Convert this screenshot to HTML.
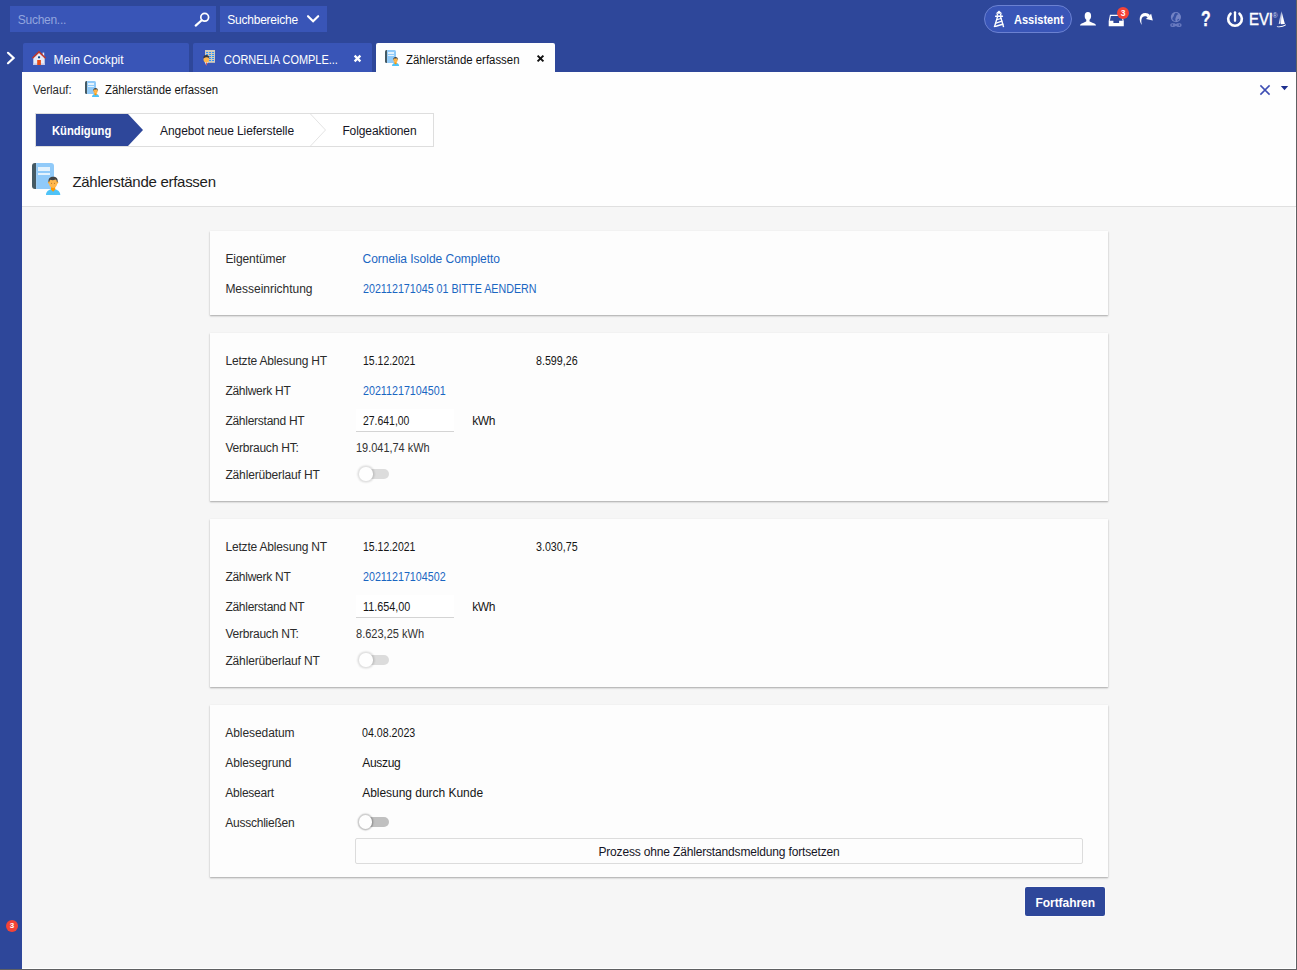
<!DOCTYPE html>
<html lang="de">
<head>
<meta charset="utf-8">
<title>Zählerstände erfassen</title>
<style>
*{box-sizing:border-box;margin:0;padding:0}
html,body{width:1297px;height:970px;overflow:hidden}
body{position:relative;background:#2e479a;font-family:"Liberation Sans",sans-serif;font-size:12px;color:#1e1e1e}
.abs{position:absolute}
svg{position:absolute;overflow:visible}
.t{position:absolute;white-space:nowrap}
#main{left:22px;top:72px;width:1274px;height:897px;background:#f6f6f6}
#hdr{left:22px;top:72px;width:1274px;height:135px;background:#fefefe;border-bottom:1px solid #e0e0e0}
#edgeR{left:1296px;top:0;width:1px;height:970px;background:#5f6062}
#edgeB{left:0;top:969px;width:1297px;height:1px;background:#5f6062}
#edgeRw{left:1295px;top:207px;width:1px;height:762px;background:#fff}
#edgeBw{left:22px;top:968px;width:1274px;height:1px;background:#fff}
.search{left:10px;top:6px;width:206px;height:26px;background:#3955b7}
.sb{left:220px;top:6px;width:107px;height:26px;background:#3955b7}
.tab{top:43px;height:29px;background:#3955b7;border-radius:2px 2px 0 0}
.card{background:#fdfdfd;box-shadow:0 1px 2px rgba(0,0,0,.25),0 1px 1px rgba(0,0,0,.08);left:210px;width:898px}
.inp{left:356px;width:98px;height:23px;background:#fff;border-bottom:1px solid #d4d4d4}
.tog{position:absolute;width:32px;height:16px}
.tog i{position:absolute;left:3px;top:3px;width:28px;height:10px;border-radius:5px;background:#c0c0c0}
.tog b{position:absolute;left:1px;top:1.3px;width:13.4px;height:13.4px;border-radius:50%;background:#fefefe;box-shadow:0 0 1.3px 1.4px rgba(0,0,0,.2),0 1px 2px rgba(0,0,0,.08)}
.tog.dis i{background:#dcdcdc}
.tog.dis b{left:1.3px;box-shadow:0 0 2px 1.6px rgba(0,0,0,.13)}
.pill{left:984px;top:5px;width:88px;height:28px;border-radius:14px;background:#3955b7;border:1px solid #6b81d1}
.badge{position:absolute;border-radius:50%;background:#f44336;color:#fff;font-weight:700;text-align:center}
.btn2{left:355px;top:838px;width:728px;height:26px;border:1px solid #dcdcdc;border-radius:2px;background:#fdfdfd}
.btn1{left:1025px;top:887px;width:80px;height:29px;border-radius:2px;background:#2e479a;box-shadow:0 0 0 1px rgba(255,255,255,.55)}
</style>
</head>
<body>
<div class="abs" id="main"></div>
<div class="abs" id="hdr"></div>
<div class="abs" id="edgeRw"></div>
<div class="abs" id="edgeBw"></div>
<div class="abs" id="edgeR"></div>
<div class="abs" id="edgeB"></div>

<!-- top bar -->
<div class="abs search"></div>
<div class="abs sb"></div>
<svg style="left:192px;top:9px" width="20" height="20" viewBox="0 0 20 20"><circle cx="12.7" cy="8.3" r="3.9" fill="none" stroke="#fff" stroke-width="1.7"/><path d="M9.7 11.3 L3.7 16.6" stroke="#fff" stroke-width="2.2" stroke-linecap="round"/></svg>
<svg style="left:305px;top:12px" width="16" height="12" viewBox="0 0 16 12"><path d="M3 4.2 L8.1 9.3 L13.2 4.2" fill="none" stroke="#fff" stroke-width="2.1" stroke-linecap="round" stroke-linejoin="miter"/></svg>
<div class="abs pill"></div>

<!-- tabs -->
<div class="abs tab" style="left:23px;width:166px"></div>
<div class="abs tab" style="left:193px;width:179px"></div>
<div class="abs tab" style="left:376px;width:179px;background:#fefefe"></div>
<svg style="left:5px;top:50px" width="12" height="16" viewBox="0 0 12 16"><path d="M3 2.8 L8.6 8 L3 13.2" fill="none" stroke="#fff" stroke-width="2.2" stroke-linecap="round" stroke-linejoin="miter"/></svg>
<svg width="0" height="0" style="position:absolute"><defs>
<symbol id="bk" viewBox="0 0 32 32">
<path d="M6.2 0 H5 A3 3 0 0 0 2 3 V23 A3 3 0 0 0 5 26 H6.2 Z" fill="#455a64"/>
<path d="M6.2 0 H21 A3 3 0 0 1 24 3 V26 H6.2 Z" fill="#90caf9"/>
<rect x="8" y="4" width="12" height="4" fill="#e3f2fd"/>
<rect x="8" y="10" width="12" height="2" fill="#e3f2fd"/>
<path d="M16 32 C16 28.6 18.5 26.8 21 26.2 L23.1 27.6 L25.2 26.2 C27.7 26.8 30.3 28.6 30.3 32 Z" fill="#4fc3f7"/>
<path d="M21 23 H25.2 V26.4 L23.1 28.8 L21 26.4 Z" fill="#ff9800"/>
<circle cx="18.9" cy="19.6" r="1" fill="#ffa726"/><circle cx="27.3" cy="19.6" r="1" fill="#ffa726"/>
<ellipse cx="23.1" cy="20" rx="4.2" ry="5" fill="#ffb74d"/>
<path d="M18.6 19 C18 15.6 20.2 13.8 23.1 13.8 C26.2 13.8 28.2 15.6 27.6 19 L26.9 19.3 C26.9 17.6 26.2 17 25.4 16.6 C24 17.4 21.4 17.4 20.4 16.8 C19.6 17.4 19.3 18 19.3 19.3 Z" fill="#424242"/>
<circle cx="21.6" cy="20.2" r=".45" fill="#784719"/><circle cx="24.6" cy="20.2" r=".45" fill="#784719"/>
</symbol>
</defs></svg>
<svg style="left:30px;top:163px" width="32" height="32"><use href="#bk"/></svg>
<svg style="left:384px;top:50px" width="16" height="16"><use href="#bk"/></svg>
<svg style="left:84px;top:81px" width="16" height="16"><use href="#bk"/></svg>

<!-- home -->
<svg style="left:31px;top:50px" width="16" height="16" viewBox="0 0 16 16">
<rect x="11.6" y="2.6" width="1.6" height="4" fill="#e8eaf6"/>
<path d="M2.3 8 L8 2.6 L13.7 8 V15 H2.3 Z" fill="#e8eaf6"/>
<rect x="2.3" y="13.4" width="11.4" height="1.6" fill="#c5cae9"/>
<path d="M1.4 8.3 L8 1.9 L14.6 8.3" fill="none" stroke="#c0392b" stroke-width="1.5" stroke-linejoin="miter"/>
<rect x="6.2" y="10" width="3.7" height="5" fill="#e64a19"/>
<rect x="7" y="6.2" width="2.1" height="2.1" rx=".6" fill="#0d4a8c"/>
</svg>
<!-- building + person -->
<svg style="left:200px;top:49px" width="18" height="18" viewBox="0 0 18 18">
<rect x="5" y="1" width="10" height="12.8" fill="#d3ccbc"/>
<g fill="#1e90ff">
<rect x="6" y="3" width="2.1" height="1.1" rx=".55"/><rect x="9" y="3" width="2.1" height="1.1" rx=".55"/><rect x="12" y="3" width="2.1" height="1.1" rx=".55"/>
<rect x="6" y="5" width="2.1" height="1.1" rx=".55"/><rect x="9" y="5" width="2.1" height="1.1" rx=".55"/><rect x="12" y="5" width="2.1" height="1.1" rx=".55"/>
<rect x="9" y="7" width="2.1" height="1.1" rx=".55"/><rect x="12" y="7" width="2.1" height="1.1" rx=".55"/>
<rect x="9" y="9" width="2.1" height="1.1" rx=".55"/><rect x="12" y="9" width="2.1" height="1.1" rx=".55"/>
<rect x="9" y="11" width="2.1" height="1.1" rx=".55"/><rect x="12" y="11" width="2.1" height="1.1" rx=".55"/>
</g>
<path d="M4.6 13 L6.3 16.4 L8 13 Z" fill="#eceff1"/>
<path d="M5.9 13.6 H6.9 L6.8 15.8 L6.4 16.6 L6 15.8 Z" fill="#e53935"/>
<ellipse cx="6.3" cy="10.4" rx="2.8" ry="3" fill="#ffb74d"/>
<path d="M3.4 9.6 C3 7.2 4.6 6.1 6.4 6.1 C8.4 6.1 9.6 7.4 9.2 9.4 C8.4 8.6 7 8.2 5.4 8.4 C4.4 8.5 3.8 9 3.4 9.6 Z" fill="#37393f"/>
</svg>
<!-- lighthouse -->
<svg style="left:992px;top:9px" width="14" height="20" viewBox="0 0 14 20">
<defs><clipPath id="lh"><path d="M4.9 7.9 H9.2 L12.3 18.1 H1.7 Z"/></clipPath></defs>
<path d="M7 1.5 L10.3 4.6 H3.7 Z" fill="#fff"/>
<path d="M4.7 4.4 H9.4 V6.7 H4.7 Z M6.1 5.1 V6.4 H8 V5.1 Z" fill="#fff" fill-rule="evenodd"/>
<rect x="3" y="6.5" width="8.1" height="1.5" rx=".4" fill="#fff"/>
<g clip-path="url(#lh)" stroke="#fff" fill="none">
<path d="M3.4 11.1 L10.6 9" stroke-width="1.2"/>
<path d="M2.6 14.6 L11.4 11.7" stroke-width="1.3"/>
<path d="M1.4 18 L12.4 14.7" stroke-width="1.5"/>
</g>
<path d="M5.5 7.9 L2.4 18.1 M8.6 7.9 L11.6 18.1" stroke="#fff" stroke-width="1.4" fill="none"/>
</svg>
<!-- user -->
<svg style="left:1078px;top:10px" width="20" height="18" viewBox="0 0 20 18">
<ellipse cx="9.9" cy="6.1" rx="3.2" ry="4" fill="#fff"/>
<path d="M8.3 8.5 H11.5 V11 C11.5 11.6 12.4 12 15 12.9 C17.2 13.7 18 14.3 18 15.6 H2 C2 14.3 2.8 13.7 5 12.9 C7.4 12 8.3 11.6 8.3 11 Z" fill="#fff"/>
</svg>
<!-- inbox -->
<svg style="left:1107px;top:13px" width="18" height="15" viewBox="0 0 18 15">
<path d="M2.3 7.8 L3.4 2.4 H14.6 L16.2 7.8" fill="none" stroke="#fff" stroke-width="1.1"/>
<path d="M1.7 7.7 H6.4 V10 H12.1 V7.7 H16.8 V13.2 H1.7 Z" fill="#fff"/>
</svg>
<!-- redo -->
<svg style="left:1137px;top:10px" width="18" height="18" viewBox="0 0 18 18">
<path d="M5 15 C1.2 10.8 2 3.1 8.4 3.1 C10.3 3.1 11.8 3.9 12.9 5 L11 7.6 C10.1 6.6 9 6.2 7.9 6.2 C4.5 6.2 3.6 10.4 5 15 Z" fill="#fff"/>
<path d="M14.1 3.8 L15.8 10.4 L9 8.9 Z" fill="#fff"/>
</svg>
<!-- globe -->
<svg style="left:1168px;top:10px" width="16" height="18" viewBox="0 0 16 18">
<circle cx="7.9" cy="7.1" r="5.1" fill="#7383c5"/>
<path d="M7.4 2.9 C8.6 2.7 10.2 3.6 10.4 4.6 C9.4 4.5 8.8 5 8.5 5.8 C8.2 6.8 7.8 7.4 7.5 8.2 C7.2 9 7.2 9.8 7.6 10.8 C7.8 11.6 6.6 11.6 5.9 10.8 C5.2 10 4 9.2 4.4 8.2 C4.8 7.2 5.6 6.6 5.9 5.4 C6.2 4.4 6.6 3.4 7.4 2.9 Z" fill="#3650a3"/>
<ellipse cx="10.1" cy="9.8" rx="1.2" ry=".7" transform="rotate(-35 10.1 9.7)" fill="#3650a3"/>
<path d="M4 13.2 H6 C6.8 13.2 7.2 13.9 7.9 13.9 C8.6 13.9 9 13.2 9.8 13.2 H11.8 A1.85 1.85 0 0 1 11.8 16.9 H9.8 C9 16.9 8.6 16.2 7.9 16.2 C7.2 16.2 6.8 16.9 6 16.9 H4 A1.85 1.85 0 0 1 4 13.2 Z M4.4 14.3 A.75 .75 0 0 0 4.4 15.8 A.75 .75 0 0 0 4.4 14.3 Z M11.4 14.3 A.75 .75 0 0 0 11.4 15.8 A.75 .75 0 0 0 11.4 14.3 Z" fill="#6879bf" fill-rule="evenodd"/>
</svg>
<!-- power -->
<svg style="left:1225px;top:9px" width="20" height="20" viewBox="0 0 20 20">
<path d="M5.5 4.7 A6.85 6.85 0 1 0 14.5 4.7" fill="none" stroke="#fff" stroke-width="2.6" stroke-linecap="round"/>
<path d="M10 3.3 V11.8" stroke="#fff" stroke-width="2.3" stroke-linecap="round"/>
</svg>
<!-- sailboat -->
<svg style="left:1275px;top:10px" width="12" height="18" viewBox="0 0 12 18">
<path d="M6.5 1.2 L9.9 13.9 L5.9 14.3 Z" fill="#fff"/>
<path d="M5.9 3 L5.6 13.6 L3.7 14 Z" fill="#dfe4f6"/>
<path d="M1.8 16.3 Q7 16.9 11 14.3 L10.6 15.5 Q7 17.8 2 17 Z" fill="#fff"/>
</svg>
<!-- tab close X -->
<svg style="left:353px;top:54px" width="9" height="9" viewBox="0 0 9 9"><path d="M1.6 1.6 L7.4 7.4 M7.4 1.6 L1.6 7.4" stroke="#fff" stroke-width="2.2" fill="none"/></svg>
<svg style="left:536px;top:54px" width="9" height="9" viewBox="0 0 9 9"><path d="M1.6 1.6 L7.4 7.4 M7.4 1.6 L1.6 7.4" stroke="#111" stroke-width="2" fill="none"/></svg>


<!-- breadcrumb -->
<div class="abs" style="left:35px;top:113px;width:399px;height:34px;border:1px solid #dedede;background:#fff"></div>
<svg style="left:36px;top:114px" width="398" height="32" viewBox="0 0 398 32"><path d="M0 0 H92 L107 16 L92 32 H0 Z" fill="#2e479a"/><path d="M274.5 0 L289.5 16 L274.5 32" fill="none" stroke="#e4e4e4" stroke-width="1"/></svg>

<!-- close + caret -->
<svg style="left:1258px;top:83px" width="14" height="14" viewBox="0 0 14 14"><path d="M2.4 2.4 L11.6 11.6 M11.6 2.4 L2.4 11.6" stroke="#3d4db3" stroke-width="1.5" fill="none"/></svg>
<svg style="left:1280px;top:85px" width="9" height="6" viewBox="0 0 9 6"><path d="M0.8 1 H8.2 L4.5 5.2 Z" fill="#1d2f8e"/></svg>

<!-- cards -->
<div class="abs card" style="top:231px;height:84px"></div>
<div class="abs card" style="top:333px;height:168px"></div>
<div class="abs card" style="top:519px;height:168px"></div>
<div class="abs card" style="top:705px;height:172px"></div>
<div class="abs inp" style="top:409px"></div>
<div class="abs inp" style="top:595px"></div>
<div class="tog dis" style="left:358px;top:466px"><i></i><b></b></div>
<div class="tog dis" style="left:358px;top:652px"><i></i><b></b></div>
<div class="tog" style="left:358px;top:814px"><i></i><b></b></div>
<div class="abs btn2"></div>
<div class="abs btn1"></div>

<!-- badges -->
<div class="badge" style="left:6px;top:920px;width:12px;height:12px;font-size:8px;line-height:12px">3</div>
<div class="badge" style="left:1117px;top:7px;width:12px;height:12px;font-size:8.5px;line-height:12px">3</div>

<div class="t" id="t0" style="left:17.80px;top:12px;font-size:12px;line-height:16px;height:16px;color:#93a5de;letter-spacing:-0.275px">Suchen...</div>
<div class="t" id="t1" style="left:227.20px;top:12px;font-size:12px;line-height:16px;height:16px;color:#ffffff;letter-spacing:-0.217px">Suchbereiche</div>
<div class="t" id="t2" style="left:53.60px;top:52px;font-size:12px;line-height:16px;height:16px;color:#ffffff;letter-spacing:0.067px">Mein Cockpit</div>
<div class="t" id="t3" style="left:223.60px;top:52px;font-size:12px;line-height:16px;height:16px;color:#ffffff;transform:scaleX(0.9134);transform-origin:0 0">CORNELIA COMPLE...</div>
<div class="t" id="t4" style="left:406.30px;top:52px;font-size:12px;line-height:16px;height:16px;color:#111;transform:scaleX(0.9505);transform-origin:0 0">Zählerstände erfassen</div>
<div class="t" id="t5" style="left:1014.40px;top:12px;font-size:12px;line-height:16px;height:16px;color:#ffffff;transform:scaleX(0.9180);transform-origin:0 0;font-weight:700">Assistent</div>
<div class="t" id="t6" style="left:32.70px;top:82px;font-size:12px;line-height:16px;height:16px;color:#2b2b2b;transform:scaleX(0.9483);transform-origin:0 0">Verlauf:</div>
<div class="t" id="t7" style="left:105.20px;top:82px;font-size:12px;line-height:16px;height:16px;color:#161616;transform:scaleX(0.9472);transform-origin:0 0">Zählerstände erfassen</div>
<div class="t" id="t8" style="left:52.40px;top:123px;font-size:12px;line-height:16px;height:16px;color:#ffffff;transform:scaleX(0.9366);transform-origin:0 0;font-weight:700">Kündigung</div>
<div class="t" id="t9" style="left:160.10px;top:123px;font-size:12px;line-height:16px;height:16px;color:#151525;letter-spacing:-0.088px">Angebot neue Lieferstelle</div>
<div class="t" id="t10" style="left:342.40px;top:123px;font-size:12px;line-height:16px;height:16px;color:#151525;letter-spacing:-0.099px">Folgeaktionen</div>
<div class="t" id="t11" style="left:72.40px;top:172px;font-size:15px;line-height:19px;height:19px;color:#1c1c1c;letter-spacing:-0.283px">Zählerstände erfassen</div>
<div class="t" id="t12" style="left:225.40px;top:251px;font-size:12px;line-height:16px;height:16px;color:#2b2b2b;letter-spacing:-0.075px">Eigentümer</div>
<div class="t" id="t13" style="left:362.50px;top:251px;font-size:12px;line-height:16px;height:16px;color:#1a66c2;letter-spacing:-0.024px">Cornelia Isolde Completto</div>
<div class="t" id="t14" style="left:225.40px;top:281px;font-size:12px;line-height:16px;height:16px;color:#2b2b2b;letter-spacing:-0.020px">Messeinrichtung</div>
<div class="t" id="t15" style="left:362.50px;top:281px;font-size:12px;line-height:16px;height:16px;color:#1a66c2;transform:scaleX(0.8917);transform-origin:0 0">202112171045 01 BITTE AENDERN</div>
<div class="t" id="t16" style="left:225.40px;top:353px;font-size:12px;line-height:16px;height:16px;color:#2b2b2b;letter-spacing:-0.173px">Letzte Ablesung HT</div>
<div class="t" id="t17" style="left:362.70px;top:353px;font-size:12px;line-height:16px;height:16px;color:#161616;transform:scaleX(0.8724);transform-origin:0 0">15.12.2021</div>
<div class="t" id="t18" style="left:536.30px;top:353px;font-size:12px;line-height:16px;height:16px;color:#161616;transform:scaleX(0.8904);transform-origin:0 0">8.599,26</div>
<div class="t" id="t19" style="left:225.40px;top:383px;font-size:12px;line-height:16px;height:16px;color:#2b2b2b;letter-spacing:-0.262px">Zählwerk HT</div>
<div class="t" id="t20" style="left:362.70px;top:383px;font-size:12px;line-height:16px;height:16px;color:#1a66c2;transform:scaleX(0.8925);transform-origin:0 0">20211217104501</div>
<div class="t" id="t21" style="left:225.40px;top:413px;font-size:12px;line-height:16px;height:16px;color:#2b2b2b;letter-spacing:-0.262px">Zählerstand HT</div>
<div class="t" id="t22" style="left:362.50px;top:413px;font-size:12px;line-height:16px;height:16px;color:#161616;transform:scaleX(0.8691);transform-origin:0 0">27.641,00</div>
<div class="t" id="t23" style="left:472.20px;top:413px;font-size:12px;line-height:16px;height:16px;color:#161616;letter-spacing:-0.350px">kWh</div>
<div class="t" id="t24" style="left:225.40px;top:440px;font-size:12px;line-height:16px;height:16px;color:#2b2b2b;letter-spacing:-0.221px">Verbrauch HT:</div>
<div class="t" id="t25" style="left:355.90px;top:440px;font-size:12px;line-height:16px;height:16px;color:#333;transform:scaleX(0.9118);transform-origin:0 0">19.041,74 kWh</div>
<div class="t" id="t26" style="left:225.40px;top:467px;font-size:12px;line-height:16px;height:16px;color:#2b2b2b;letter-spacing:-0.145px">Zählerüberlauf HT</div>
<div class="t" id="t27" style="left:225.40px;top:539px;font-size:12px;line-height:16px;height:16px;color:#2b2b2b;letter-spacing:-0.173px">Letzte Ablesung NT</div>
<div class="t" id="t28" style="left:362.70px;top:539px;font-size:12px;line-height:16px;height:16px;color:#161616;transform:scaleX(0.8724);transform-origin:0 0">15.12.2021</div>
<div class="t" id="t29" style="left:536.30px;top:539px;font-size:12px;line-height:16px;height:16px;color:#161616;transform:scaleX(0.8904);transform-origin:0 0">3.030,75</div>
<div class="t" id="t30" style="left:225.40px;top:569px;font-size:12px;line-height:16px;height:16px;color:#2b2b2b;letter-spacing:-0.262px">Zählwerk NT</div>
<div class="t" id="t31" style="left:362.70px;top:569px;font-size:12px;line-height:16px;height:16px;color:#1a66c2;transform:scaleX(0.8925);transform-origin:0 0">20211217104502</div>
<div class="t" id="t32" style="left:225.40px;top:599px;font-size:12px;line-height:16px;height:16px;color:#2b2b2b;letter-spacing:-0.262px">Zählerstand NT</div>
<div class="t" id="t33" style="left:362.50px;top:599px;font-size:12px;line-height:16px;height:16px;color:#161616;transform:scaleX(0.9010);transform-origin:0 0">11.654,00</div>
<div class="t" id="t34" style="left:472.20px;top:599px;font-size:12px;line-height:16px;height:16px;color:#161616;letter-spacing:-0.350px">kWh</div>
<div class="t" id="t35" style="left:225.40px;top:626px;font-size:12px;line-height:16px;height:16px;color:#2b2b2b;letter-spacing:-0.221px">Verbrauch NT:</div>
<div class="t" id="t36" style="left:355.90px;top:626px;font-size:12px;line-height:16px;height:16px;color:#333;transform:scaleX(0.9197);transform-origin:0 0">8.623,25 kWh</div>
<div class="t" id="t37" style="left:225.40px;top:653px;font-size:12px;line-height:16px;height:16px;color:#2b2b2b;letter-spacing:-0.145px">Zählerüberlauf NT</div>
<div class="t" id="t38" style="left:225.30px;top:725px;font-size:12px;line-height:16px;height:16px;color:#2b2b2b;letter-spacing:-0.075px">Ablesedatum</div>
<div class="t" id="t39" style="left:362.20px;top:725px;font-size:12px;line-height:16px;height:16px;color:#161616;transform:scaleX(0.8874);transform-origin:0 0">04.08.2023</div>
<div class="t" id="t40" style="left:225.30px;top:755px;font-size:12px;line-height:16px;height:16px;color:#2b2b2b;letter-spacing:-0.129px">Ablesegrund</div>
<div class="t" id="t41" style="left:362.20px;top:755px;font-size:12px;line-height:16px;height:16px;color:#161616;letter-spacing:-0.306px">Auszug</div>
<div class="t" id="t42" style="left:225.30px;top:785px;font-size:12px;line-height:16px;height:16px;color:#2b2b2b;letter-spacing:-0.238px">Ableseart</div>
<div class="t" id="t43" style="left:362.20px;top:785px;font-size:12px;line-height:16px;height:16px;color:#161616;letter-spacing:-0.028px">Ablesung durch Kunde</div>
<div class="t" id="t44" style="left:225.30px;top:815px;font-size:12px;line-height:16px;height:16px;color:#2b2b2b;letter-spacing:-0.250px">Ausschließen</div>
<div class="t" id="t45" style="left:598.40px;top:844px;font-size:12px;line-height:16px;height:16px;color:#151525;letter-spacing:-0.163px">Prozess ohne Zählerstandsmeldung fortsetzen</div>
<div class="t" id="t46" style="left:1035.50px;top:895px;font-size:12px;line-height:16px;height:16px;color:#ffffff;letter-spacing:-0.056px;font-weight:700">Fortfahren</div>
<div class="t" id="t47" style="left:1200.70px;top:6px;font-size:22px;line-height:26px;height:26px;color:#ffffff;transform:scaleX(0.7210);transform-origin:0 0;font-weight:700;-webkit-text-stroke:.35px #fff">?</div>
<div class="t" id="t48" style="left:1248.80px;top:9px;font-size:17px;line-height:21px;height:21px;color:#ffffff;transform:scaleX(0.8757);transform-origin:0 0;-webkit-text-stroke:.45px #fff">EVI</div>
<div class="t" id="t49" style="left:1272.40px;top:10px;font-size:7px;line-height:11px;height:11px;color:#cfd5f0;letter-spacing:0.228px">®</div>
</body>
</html>
